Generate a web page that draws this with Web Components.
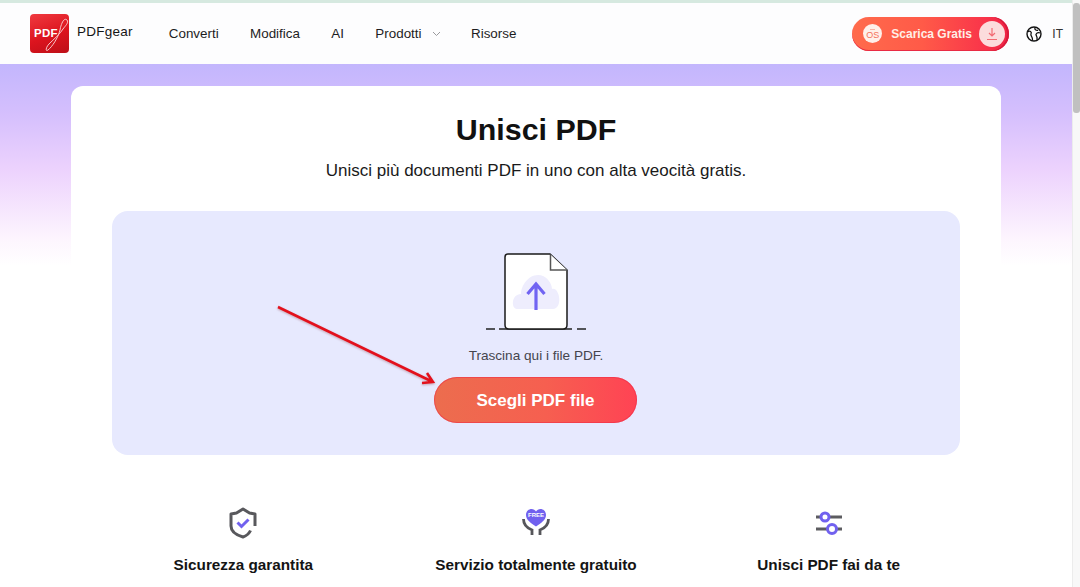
<!DOCTYPE html>
<html lang="it">
<head>
<meta charset="utf-8">
<title>Unisci PDF</title>
<style>
html,body{margin:0;padding:0;height:587px;overflow:hidden;background:#fff}
body{font-family:"Liberation Sans",Arial,sans-serif;color:#111}
</style>
</head>
<body>
<pg-app>
  <pg-header></pg-header>
  <pg-main>
    <pg-card>
      <pg-dropzone></pg-dropzone>
      <pg-features>
        <pg-feature label="Sicurezza garantita">
          <svg slot="icon" width="32" height="34" viewBox="0 0 32 34" fill="none">
            <path d="M23.5 24.5C22 28 19 30 16 31C9 29 4 25 4 20V8L9.5 7L16 3L22.5 7L28 8V20" stroke="#58585c" stroke-width="3" stroke-linejoin="round" stroke-linecap="butt"/>
            <path d="M10.5 16.5L14.5 20.5L21.5 13.5" stroke="#7161ef" stroke-width="3"/>
          </svg>
        </pg-feature>
        <pg-feature label="Servizio totalmente gratuito">
          <pg-free-icon slot="icon"></pg-free-icon>
        </pg-feature>
        <pg-feature label="Unisci PDF fai da te">
          <svg slot="icon" width="32" height="34" viewBox="0 0 32 34" fill="none">
            <path d="M3 11H29M3 23H29" stroke="#5c5c60" stroke-width="3"/>
            <circle cx="12" cy="11" r="4" fill="#fff" stroke="#7161ef" stroke-width="3"/>
            <circle cx="19" cy="23" r="4.5" fill="#fff" stroke="#7161ef" stroke-width="3"/>
          </svg>
        </pg-feature>
      </pg-features>
    </pg-card>
  </pg-main>
  <pg-scrollbar></pg-scrollbar>
</pg-app>
<script>
function def(name, css, html){
  customElements.define(name, class extends HTMLElement{
    constructor(){super();const s=this.attachShadow({mode:'open'});
      s.innerHTML='<style>'+css+'</style>'+html;}
    connectedCallback(){
      if(this.hasAttribute('label')){const l=this.shadowRoot.querySelector('[data-label]');if(l)l.textContent=this.getAttribute('label');}
    }
  });
}
def('pg-app',
 `:host{display:grid;grid-template-columns:1fr 8px;grid-template-rows:64px 523px;width:1080px;height:587px;overflow:hidden}
  ::slotted(pg-header){grid-column:1/3;grid-row:1}
  ::slotted(pg-main){grid-column:1;grid-row:2}
  ::slotted(pg-scrollbar){grid-column:2;grid-row:1/3}`,
 `<slot></slot>`);
def('pg-logo',
 `:host{display:flex;align-items:center;gap:8px}
  .mark{position:relative;width:39px;height:39px;border-radius:4px;background:linear-gradient(160deg,#f03a40 0%,#dc141e 55%,#bd0f18 100%);display:block;overflow:hidden}
  .mark b{position:absolute;left:4px;top:13px;font:bold 11.5px/13px "Liberation Sans",sans-serif;color:#fff;letter-spacing:.3px}
  svg{position:absolute;left:0;top:0}
  .name{font:13.5px/18px "Liberation Sans",sans-serif;letter-spacing:.25px;color:#151515;margin-top:-4px}`,
 `<span class="mark"><b>PDF</b>
   <svg width="39" height="39" viewBox="0 0 39 39" fill="none"><path d="M37 6C34 3 31 10 30 16C28 24 22 33 18 36C15 38 16 33 19 30C24 25 30 20 33 15C35 12 39 9 37 6Z" stroke="#f8c6c9" stroke-width="1"/></svg>
  </span><span class="name">PDFgear</span>`);
def('pg-nav',
 `:host{display:flex;align-items:center;font:13.4px/18px "Liberation Sans",sans-serif;color:#1d1d1f}
  span{display:inline-block;margin-left:31.4px}
  span:first-of-type{margin-left:0}
  svg{margin-left:10px;display:block}
  svg + span{margin-left:30.500px}`,
 `<span>Converti</span><span>Modifica</span><span>AI</span><span>Prodotti</span>
  <svg width="9" height="6" viewBox="0 0 9 6" fill="none"><path d="M1 1L4.500 4.500L8 1" stroke="#9a9a9e" stroke-width="1"/></svg>
  <span>Risorse</span>`);
def('pg-download',
 `:host{display:flex;align-items:center;box-sizing:border-box;width:157px;height:34px;border-radius:17px;background:linear-gradient(90deg,#ff6b4c 0%,#ff5a48 45%,#f9344a 85%,#ee2244 100%);padding:0 4px 0 11px;box-shadow:inset -2px 0 0 #d81a3c,inset 0 -1px 0 #e92a44}
  .os{width:19px;height:19px;border-radius:50%;background:#fff0ea;color:#f4705a;display:flex;flex-direction:column;align-items:center;justify-content:center;font:9px/8px "Liberation Sans",sans-serif;flex:none;box-sizing:border-box}
  .os i{display:block;width:5px;height:1px;background:#f7b3a5;margin-bottom:1px}
  .t{font:bold 12px/14px "Liberation Sans",sans-serif;color:#ffeee6;margin-left:9px;flex:1;white-space:nowrap}
  .d{width:26px;height:26px;border-radius:50%;background:#fcdcdc;display:flex;align-items:center;justify-content:center;flex:none}`,
 `<span class="os"><i></i>OS</span><span class="t">Scarica Gratis</span>
  <span class="d"><svg width="12" height="14" viewBox="0 0 12 14" fill="none"><path d="M6 1V8.500M3 6L6 9L9 6M1 12.500H11" stroke="#f26a72" stroke-width="1.200"/></svg></span>`);
def('pg-lang',
 `:host{display:flex;align-items:center;gap:10px;font:12px/14px "Liberation Sans",sans-serif;color:#333}`,
 `<svg width="16" height="16" viewBox="0 0 16 16" fill="none"><circle cx="8" cy="8" r="7" stroke="#111" stroke-width="1.400"/><path d="M1.500 6C4 4 6 6 5 8C4 10 7 10 6.500 14.500M9 1.500C8 4 11 5 12 4M14.500 7C11 6 9 8 10.500 10C11.500 11.500 11 13 11 14" stroke="#111" stroke-width="1.300"/></svg><span>IT</span>`);
def('pg-header',
 `:host{display:flex;align-items:center;box-sizing:border-box;height:64px;background:#fdfdfe;border-top:3px solid #d6e9e0;padding:0 17px 0 30px}
  pg-nav{margin-left:36px}
  .sp{flex:1}
  pg-lang{margin-left:17px}`,
 `<pg-logo></pg-logo><pg-nav></pg-nav><span class="sp"></span><pg-download></pg-download><pg-lang></pg-lang>`);
def('pg-main',
 `:host{display:block;box-sizing:border-box;height:523px;padding:22px 71px 0;overflow:hidden;background:linear-gradient(180deg,#c3b6fd 0,#d5bffd 50px,#ecd2fd 105px,#fdf5fe 175px,#fff 202px)}`,
 `<slot></slot>`);
def('pg-card',
 `:host{display:block;background:#fff;border-radius:12px 12px 0 0;height:520px;padding-top:23px;box-sizing:border-box}
  h1{margin:0;text-align:center;font:bold 30.4px/40px "Liberation Sans",sans-serif;color:#111}
  p{margin:11px 0 0;text-align:center;font:17px/22px "Liberation Sans",sans-serif;color:#1a1a1a}
  ::slotted(pg-dropzone){margin:29px 41px 0}
  ::slotted(pg-features){margin:51px 26px 0}`,
 `<h1>Unisci PDF</h1><p>Unisci più documenti PDF in uno con alta veocità gratis.</p><slot></slot>`);
def('pg-dropzone',
 `:host{display:flex;flex-direction:column;align-items:center;position:relative;box-sizing:border-box;height:244px;background:#e7e9fe;border-radius:16px;padding-top:39px}
  .file{display:block;margin-right:2px}
  .tx{margin-top:13px;font:13.6px/16px "Liberation Sans",sans-serif;color:#45454d}
  button{margin:13px 1px 0 0;width:203px;height:46px;border:0;border-radius:23px;background:linear-gradient(90deg,#ec6d4e 0%,#f65f50 55%,#ff4354 100%);color:#fff;font:bold 17px/20px "Liberation Sans",sans-serif;box-shadow:inset 0 0 0 1px rgba(238,40,70,.5);padding:2px 0 0}
  .arrow{position:absolute;left:160px;top:90px;overflow:visible}`,
 `<svg class="file" width="110" height="85" viewBox="0 0 110 85" fill="none">
    <path d="M6 79H15M19 79H92M97 79H106" stroke="#222" stroke-width="1.400"/>
    <path d="M28 4H70L87 20V75Q87 79 83 79H29Q25 79 25 75V7Q25 4 28 4Z" fill="#fff" stroke="#1a1a1a" stroke-width="1.500"/>
    <path d="M70.500 4.500V20H87" fill="#fff" stroke="#555" stroke-width="1.500"/>
    <path d="M37 59C31 59 31 44 41 44C41 36 48 25 58 25C66 25 72 33 72 39C80 37 83 59 73 59Z" fill="#eeedfd"/>
    <path d="M56 60V34M47.500 44L56 34L64.500 44" stroke="#7164f2" stroke-width="3.200"/>
  </svg>
  <span class="tx">Trascina qui i file PDF.</span>
  <button>Scegli PDF file</button>
  <svg class="arrow" width="170" height="90" viewBox="0 0 170 90" fill="none">
    <path d="M6 6L161 81M155 72L161 81L150 82" stroke="#e3101c" stroke-width="2.500" style="filter:drop-shadow(0 1px 1px rgba(120,0,0,.3))"/>
  </svg>`);
def('pg-features',
 `:host{display:grid;grid-template-columns:repeat(3,1fr)}`,
 `<slot></slot>`);
def('pg-feature',
 `:host{display:flex;flex-direction:column;align-items:center}
  .i{height:34px;display:flex;align-items:center;justify-content:center}
  .l{margin-top:16px;font:bold 15.3px/18px "Liberation Sans",sans-serif;color:#141414}`,
 `<div class="i"><slot name="icon"></slot></div><div class="l" data-label></div>`);
def('pg-free-icon',
 `:host{display:block;position:relative;width:32px;height:34px}
  b{position:absolute;left:0;right:0;top:5.500px;text-align:center;font:bold 6px/7px "Liberation Sans",sans-serif;color:#fff;letter-spacing:0}`,
 `<svg width="32" height="34" viewBox="0 0 32 34" fill="none" style="display:block">
    <path d="M16 20.500C11 17 6 14 6 9C6 5 9 3 11.500 3C13.500 3 15 4 16 5.500C17 4 18.500 3 20.500 3C23 3 26 5 26 9C26 14 21 17 16 20.500Z" fill="#7161ef"/>
    <path d="M3.500 13C3.500 18 7 22 12 24V29M28.500 13C28.500 18 25 22 20 24V29" stroke="#56565a" stroke-width="2.800"/>
  </svg><b>FREE</b>`);
def('pg-scrollbar',
 `:host{display:block;background:#f8f8f8;border-left:1px solid #ececec;box-sizing:border-box;padding-top:3px}
  i{display:block;width:7px;height:110px;background:#c0c0c0;border-radius:3px}`,
 `<i></i>`);
</script>
</body>
</html>
